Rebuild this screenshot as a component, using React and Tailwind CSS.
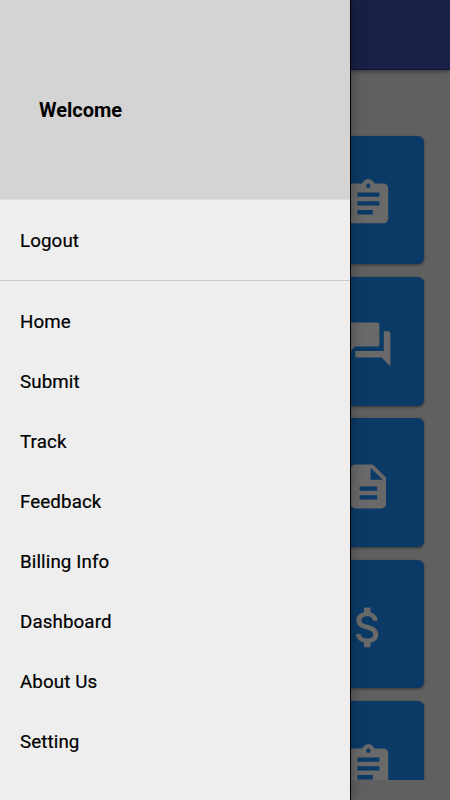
const clipboard =
  "M17,9H7V7H17M17,13H7V11H17M14,17H7V15H14M12,3A1,1 0 0,1 13,4A1,1 0 0,1 12,5A1,1 0 0,1 11,4A1,1 0 0,1 12,3M19,3H14.82C14.4,1.84 13.3,1 12,1C10.7,1 9.6,1.84 9.18,3H5A2,2 0 0,0 3,5V19A2,2 0 0,0 5,21H19A2,2 0 0,0 21,19V5A2,2 0 0,0 19,3Z";
const chat =
  "M21 6h-2v9H6v2c0 .55.45 1 1 1h11l4 4V7c0-.55-.45-1-1-1zm-4 6V3c0-.55-.45-1-1-1H3c-.55 0-1 .45-1 1v14l4-4h10c.55 0 1-.45 1-1z";
const file =
  "M14 2H6c-1.1 0-1.99.9-1.99 2L4 20c0 1.1.89 2 1.99 2H18c1.1 0 2-.9 2-2V8l-6-6zm2 16H8v-2h8v2zm0-4H8v-2h8v2zm-3-5V3.5L18.5 9H13z";
const dollar =
  "M11.8 10.9c-2.27-.59-3-1.2-3-2.15 0-1.09 1.01-1.85 2.7-1.85 1.78 0 2.44.85 2.5 2.1h2.21c-.07-1.72-1.12-3.3-3.21-3.81V3h-3v2.16c-1.94.42-3.5 1.68-3.5 3.61 0 2.31 1.91 3.46 4.7 4.13 2.5.6 3 1.48 3 2.41 0 .69-.49 1.79-2.7 1.79-2.06 0-2.87-.92-2.98-2.1h-2.2c.12 2.19 1.76 3.42 3.68 3.83V21h3v-2.15c1.95-.37 3.5-1.5 3.5-3.55 0-2.84-2.43-3.81-4.7-4.4z";

const tiles = [clipboard, chat, file, dollar, clipboard];
const links = ["Home", "Submit", "Track", "Feedback", "Billing Info", "Dashboard", "About Us", "Setting"];

function Tile({ path }) {
  return (
    <div className="flex h-[128.5px] w-[110px] shrink-0 items-center justify-center rounded-[6px] bg-[#0b3a66] pt-[6.6px] shadow-[0_1px_3px_rgba(0,0,0,0.45)]">
      <svg viewBox="0 0 24 24" className="size-[52.8px] shrink-0 fill-[#696969]">
        <path d={path} />
      </svg>
    </div>
  );
}

function MenuItem({ children }) {
  return (
    <li className="flex h-[60px] items-center pl-5 text-[18.75px] leading-6 font-normal tracking-[0.1px] text-black [-webkit-text-stroke:0.2px_black]">
      {children}
    </li>
  );
}

export default function App() {
  return (
    <div className="relative h-[800px] w-[450px] overflow-hidden bg-[#606060] font-[Roboto,sans-serif]">
      <div className="flex h-[780px] flex-col overflow-hidden">
        <header className="h-[70px] shrink-0 border-b border-[#0c1440] bg-[#1a2045] shadow-[0_1px_5px_rgba(0,0,0,0.5)]" />
        <main className="flex flex-col items-end gap-[12.8px] pt-[65.8px] pr-[26.3px]">
          {tiles.map((path, i) => (
            <Tile key={i} path={path} />
          ))}
        </main>
      </div>

      <nav className="absolute inset-y-0 left-0 flex w-[351px] flex-col border-r border-black bg-[#eeeeee] shadow-[0_0_12px_rgba(0,0,0,0.35)]">
        <div className="h-[200px] shrink-0 border-b border-[#dedede] bg-[#d4d4d4] pt-[98px] pl-[39px]">
          <h1 className="text-[20px] leading-6 font-bold text-black">Welcome</h1>
        </div>
        <ul className="border-b border-[#c8c8c8] pt-[10.5px] pb-[9.5px]">
          <MenuItem>Logout</MenuItem>
        </ul>
        <ul className="pt-[10.5px]">
          {links.map((label) => (
            <MenuItem key={label}>{label}</MenuItem>
          ))}
        </ul>
      </nav>
    </div>
  );
}
